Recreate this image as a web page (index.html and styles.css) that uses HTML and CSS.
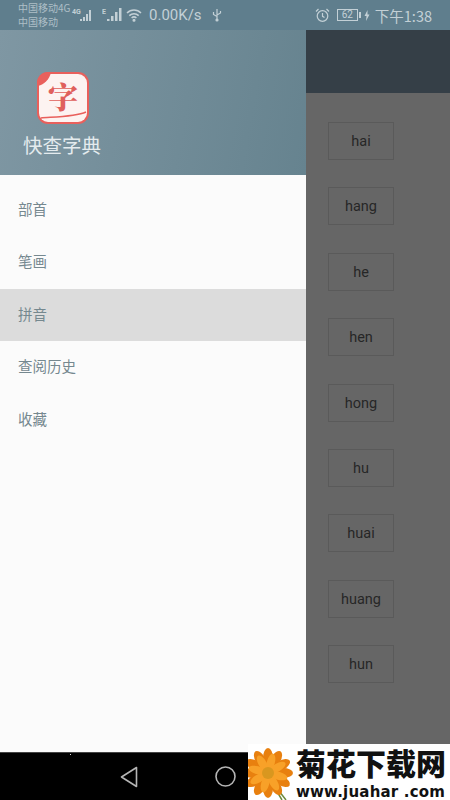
FILE: index.html
```html
<!DOCTYPE html>
<html lang="zh-CN">

<head>
    <meta charset="UTF-8">
    <meta name="viewport" content="width=device-width, initial-scale=1.0">
    <title>快查字典</title>
    <link rel="stylesheet" href="styles.css">
</head>

<body>
    <div class="screen">
        <header class="status-bar">
            <div class="carriers">
                <span>中国移动4G</span>
                <span>中国移动</span>
            </div>
            <svg class="signal" width="24" height="16" viewBox="0 0 24 16">
                <text x="1" y="7" class="signal-label">4G</text>
                <path d="M9 14h2v-2H9zM12 14h2V10h-2zM15 14h2V7h-2zM18 14h2V3h-2z" fill="#c3d0d6" />
            </svg>
            <svg class="signal signal-second" width="20" height="16" viewBox="0 0 20 16">
                <text x="0" y="7" class="signal-label">E</text>
                <path d="M5 14h2.500v-2H5zM9 14h2.500V9H9zM13 14h2.500V5H13zM17 14h2.500V1H17z" fill="#c3d0d6" />
            </svg>
            <svg class="wifi" width="16" height="14" viewBox="0 0 16 14" fill="none" stroke="#c3d0d6" stroke-width="1.5">
                <path d="M1 5c4-4 10-4 14 0" />
                <path d="M3.300 7.600c2.700-2.600 6.700-2.600 9.400 0" />
                <path d="M5.600 10c1.400-1.300 3.400-1.300 4.800 0" />
                <circle cx="8" cy="12.300" r="0.800" fill="#c3d0d6" />
            </svg>
            <span class="speed">0.00K/s</span>
            <svg class="usb" width="10" height="14" viewBox="0 0 10 14" fill="none" stroke="#c3d0d6" stroke-width="1.2">
                <path d="M5 1v12M1.500 4v2.500L5 8.500M8.500 3v2L5 7" />
                <circle cx="5" cy="12" r="1" fill="#c3d0d6" />
            </svg>
            <div class="status-right">
                <svg width="15" height="15" viewBox="0 0 15 15" fill="none" stroke="#c3d0d6" stroke-width="1.200">
                    <circle cx="7.500" cy="8" r="5.300" />
                    <path d="M7.500 5v3.300l2 1.200M1 3.500L3.500 1M14 3.500L11.500 1" />
                </svg>
                <span class="battery">62</span>
                <svg class="bolt" width="6" height="11" viewBox="0 0 6 11">
                    <path d="M3.500 0L0.500 6h2L2 11l3.500-6.500h-2z" fill="#c3d0d6" />
                </svg>
                <span class="clock">下午1:38</span>
            </div>
        </header>

        <div class="main">
            <aside class="drawer">
                <div class="drawer-head">
                    <svg class="app-icon" width="54" height="54" viewBox="0 0 54 54">
                        <rect x="1" y="1" width="52" height="52" rx="11" fill="#e9605c" />
                        <rect x="3" y="3" width="48" height="48" rx="9" fill="#fdf3f1" />
                        <path d="M1 12C1 6 6 1 12 1h3C14 8 8 14 1 15z" fill="#e9605c" />
                        <path d="M5 47c10-1 34-1 45-6" fill="none" stroke="#e9605c" stroke-width="1.500" />
                        <text x="27" y="37" class="app-icon-char">字</text>
                    </svg>
                    <div class="app-name">快查字典</div>
                </div>
                <nav class="menu">
                    <a class="menu-item">部首</a>
                    <a class="menu-item">笔画</a>
                    <a class="menu-item active">拼音</a>
                    <a class="menu-item">查阅历史</a>
                    <a class="menu-item">收藏</a>
                </nav>
            </aside>
            <section class="content">
                <div class="toolbar"></div>
                <div class="pinyin-list">
                    <div class="pinyin">hai</div>
                    <div class="pinyin">hang</div>
                    <div class="pinyin">he</div>
                    <div class="pinyin">hen</div>
                    <div class="pinyin">hong</div>
                    <div class="pinyin">hu</div>
                    <div class="pinyin">huai</div>
                    <div class="pinyin">huang</div>
                    <div class="pinyin">hun</div>
                </div>
            </section>
        </div>

        <footer class="nav-bar">
            <svg width="18" height="22" viewBox="0 0 18 22" fill="none" stroke="#b5b5b5" stroke-width="1.600" stroke-linejoin="round">
                <path d="M16.500 1.500v19L1.500 11z" />
            </svg>
            <svg class="nav-home" width="21" height="21" viewBox="0 0 21 21" fill="none" stroke="#b5b5b5" stroke-width="1.600">
                <circle cx="10.500" cy="10.500" r="9.500" />
            </svg>
        </footer>

        <div class="watermark">
            <svg width="46" height="56" viewBox="0 0 46 56">
                <path d="M22 36l12 20M24 38l14 18" stroke="#6d8a3c" stroke-width="1.500" fill="none" />
                <g transform="translate(20 29)">
                    <g fill="#e8800f">
                        <ellipse cx="0" cy="-15" rx="5" ry="10" />
                        <ellipse cx="0" cy="-15" rx="5" ry="10" transform="rotate(30)" />
                        <ellipse cx="0" cy="-15" rx="5" ry="10" transform="rotate(60)" />
                        <ellipse cx="0" cy="-15" rx="5" ry="10" transform="rotate(90)" />
                        <ellipse cx="0" cy="-15" rx="5" ry="10" transform="rotate(120)" />
                        <ellipse cx="0" cy="-15" rx="5" ry="10" transform="rotate(150)" />
                        <ellipse cx="0" cy="-15" rx="5" ry="10" transform="rotate(180)" />
                        <ellipse cx="0" cy="-15" rx="5" ry="10" transform="rotate(210)" />
                        <ellipse cx="0" cy="-15" rx="5" ry="10" transform="rotate(240)" />
                        <ellipse cx="0" cy="-15" rx="5" ry="10" transform="rotate(270)" />
                        <ellipse cx="0" cy="-15" rx="5" ry="10" transform="rotate(300)" />
                        <ellipse cx="0" cy="-15" rx="5" ry="10" transform="rotate(330)" />
                    </g>
                    <g fill="#f8a128">
                        <ellipse cx="0" cy="-11" rx="4" ry="9" transform="rotate(15)" />
                        <ellipse cx="0" cy="-11" rx="4" ry="9" transform="rotate(60)" />
                        <ellipse cx="0" cy="-11" rx="4" ry="9" transform="rotate(105)" />
                        <ellipse cx="0" cy="-11" rx="4" ry="9" transform="rotate(150)" />
                        <ellipse cx="0" cy="-11" rx="4" ry="9" transform="rotate(195)" />
                        <ellipse cx="0" cy="-11" rx="4" ry="9" transform="rotate(240)" />
                        <ellipse cx="0" cy="-11" rx="4" ry="9" transform="rotate(285)" />
                        <ellipse cx="0" cy="-11" rx="4" ry="9" transform="rotate(330)" />
                    </g>
                    <circle r="6" fill="#d9971f" />
                </g>
            </svg>
            <div class="watermark-text">
                <div class="watermark-title">菊花下载网</div>
                <div class="watermark-url">www.juahar .com</div>
            </div>
        </div>
    </div>
</body>

</html>
```

FILE: styles.css
```css
* {
    box-sizing: border-box;
}

body {
    margin: 0;
    font-family: "Noto Sans CJK SC", Roboto, sans-serif;
    background-color: #000000;
}

.screen {
    position: relative;
    display: flex;
    flex-direction: column;
    width: 450px;
    height: 800px;
    overflow: hidden;
}

.status-bar {
    display: flex;
    align-items: center;
    height: 30px;
    padding: 0 18px;
    background-color: #5f7e8d;
    color: #c3d0d6;
}

.carriers {
    display: flex;
    flex-direction: column;
    width: 53px;
    font-size: 10px;
    line-height: 14px;
    white-space: nowrap;
    color: #aebfc7;
}

.signal-label {
    font-family: Roboto, sans-serif;
    font-size: 7px;
    font-weight: 700;
    fill: #c3d0d6;
}

.signal-second {
    margin-left: 7px;
}

.wifi {
    margin-left: 4px;
}

.speed {
    margin-left: 7px;
    font-family: Roboto, sans-serif;
    font-size: 15px;
}

.usb {
    margin-left: 10px;
}

.status-right {
    display: flex;
    align-items: center;
    margin-left: auto;
}

.battery {
    position: relative;
    width: 21px;
    height: 12px;
    margin-left: 7px;
    border: 1px solid #c3d0d6;
    font-family: Roboto, sans-serif;
    font-size: 10px;
    line-height: 10px;
    text-align: center;
}

.battery::after {
    content: "";
    position: absolute;
    top: 2px;
    right: -4px;
    width: 2px;
    height: 6px;
    background-color: #c3d0d6;
}

.bolt {
    margin-left: 6px;
}

.clock {
    margin-left: 5px;
    font-size: 14.500px;
}

.main {
    display: flex;
    flex: 1;
    min-height: 0;
}

.drawer {
    display: flex;
    flex-direction: column;
    width: 306px;
    background-color: #fbfbfb;
}

.drawer-head {
    display: flex;
    flex-direction: column;
    align-items: flex-start;
    height: 145px;
    padding: 41px 0 0 23px;
    background: linear-gradient(100deg, #7f97a3, #66838f);
}

.app-icon {
    margin-left: 13px;
}

.app-icon-char {
    font-family: "Noto Serif CJK SC", "Noto Sans CJK SC", serif;
    font-size: 30px;
    font-weight: 900;
    text-anchor: middle;
    fill: #e0605c;
}

.app-name {
    margin-top: 7px;
    font-size: 19.500px;
    line-height: 26px;
    color: #e4ebee;
}

.menu {
    display: flex;
    flex-direction: column;
    padding-top: 9px;
}

.menu-item {
    height: 52.400px;
    padding-left: 18px;
    font-size: 14.500px;
    line-height: 50px;
    color: #75888f;
}

.menu-item.active {
    background-color: #dcdcdc;
}

.content {
    display: flex;
    flex-direction: column;
    flex: 1;
    background-color: #666666;
}

.toolbar {
    height: 63px;
    background-color: #353f47;
}

.pinyin-list {
    display: flex;
    flex-direction: column;
    gap: 27.400px;
    padding: 29px 0 0 22px;
}

.pinyin {
    width: 66px;
    height: 38px;
    border: 1px solid #5a5a5a;
    font-family: Roboto, sans-serif;
    font-size: 14.500px;
    line-height: 38px;
    text-align: center;
    color: #262626;
}

.nav-bar {
    position: relative;
    display: flex;
    align-items: center;
    height: 48px;
    padding-left: 120px;
    border-top: 1px solid #444444;
    background-color: #000000;
}

.nav-bar::before {
    content: "";
    position: absolute;
    top: 1px;
    left: 70px;
    width: 1px;
    height: 1px;
    background-color: #dddddd;
}

.nav-home {
    margin-left: 77px;
}

.watermark {
    position: absolute;
    left: 248px;
    bottom: 0;
    display: flex;
    width: 202px;
    height: 56px;
    background-color: #ffffff;
}

.watermark-text {
    margin-left: 2px;
    color: #111111;
}

.watermark-title {
    font-size: 30px;
    font-weight: 900;
    line-height: 36px;
    white-space: nowrap;
}

.watermark-url {
    margin-top: 4px;
    font-family: "DejaVu Sans", sans-serif;
    font-size: 15px;
    font-weight: 700;
    line-height: 16px;
    letter-spacing: 0.2px;
    white-space: nowrap;
}
```
